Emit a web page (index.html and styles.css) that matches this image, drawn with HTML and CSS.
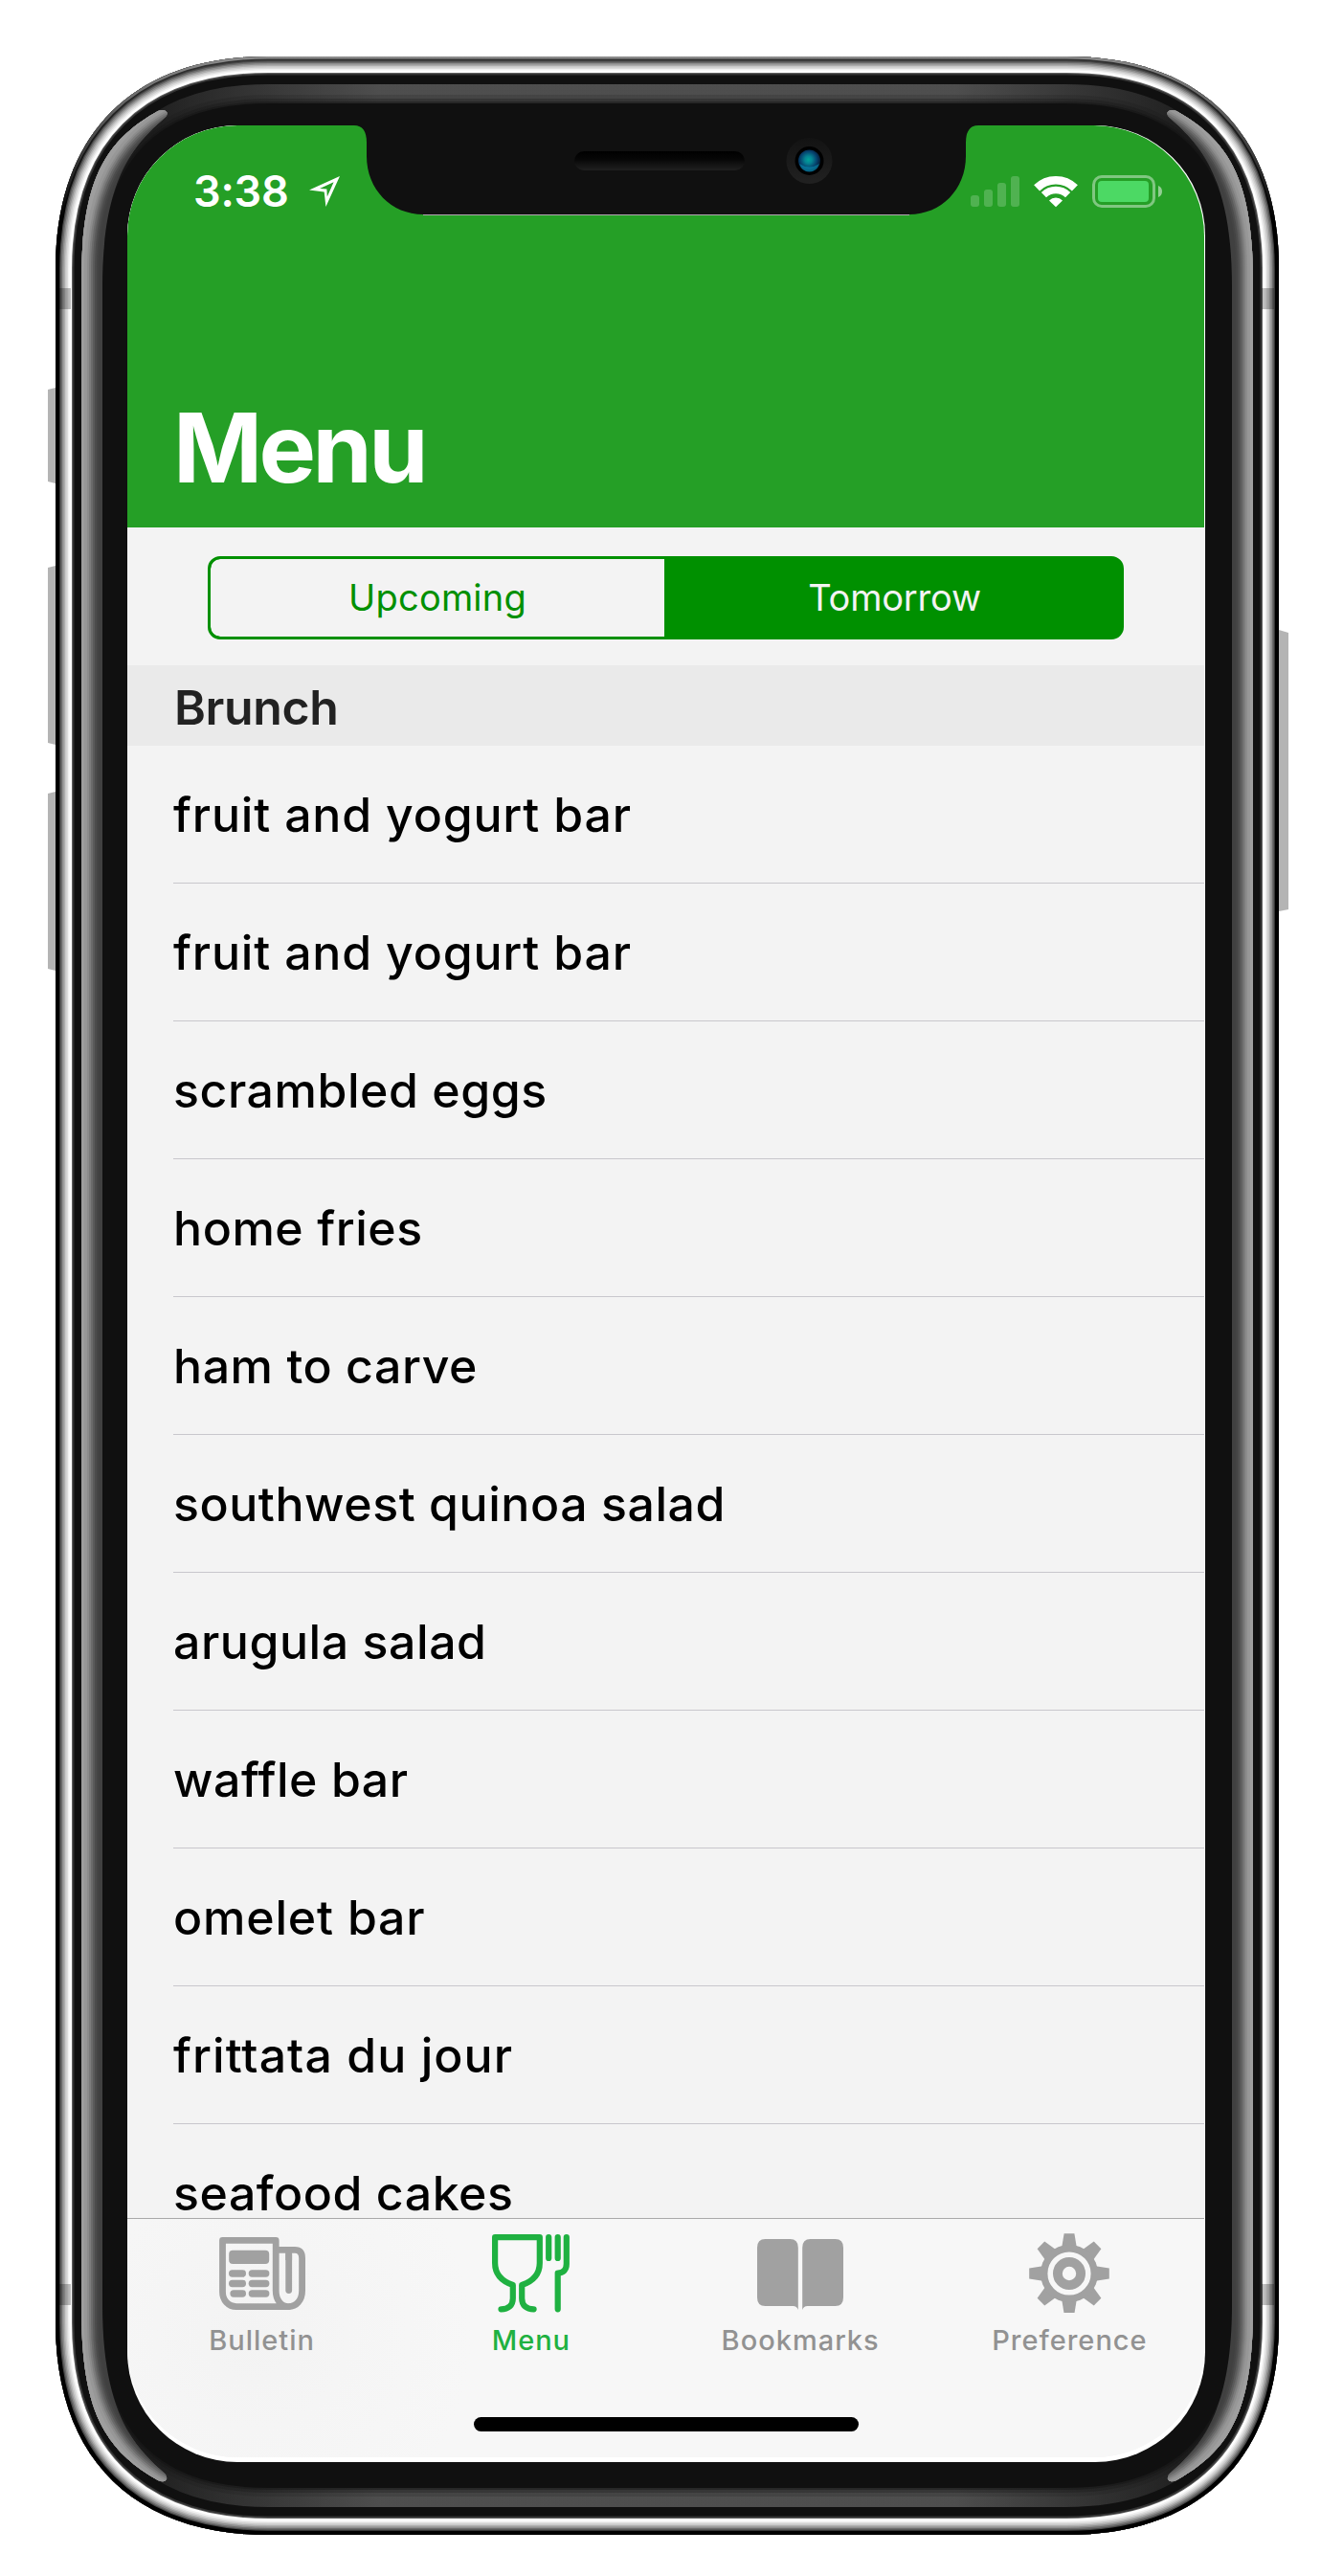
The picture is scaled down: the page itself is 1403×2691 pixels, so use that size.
FILE: index.html
```html
<!DOCTYPE html>
<html lang="en">
<head>
<meta charset="utf-8">
<title>Menu</title>
<link rel="stylesheet" href="styles.css">
</head>
<body>
<div class="phone">
  <svg class="frame" viewBox="0 0 1403 2691" aria-hidden="true">
    <defs>
      <path id="outline" d="M58 281C58 140 139 59 280 59H1114C1255 59 1336 140 1336 281V2426C1336 2567 1255 2648 1114 2648H280C139 2648 58 2567 58 2426Z"/>
      <clipPath id="body"><use href="#outline"/></clipPath>
      <clipPath id="glint">
        <path d="M85 290C86 190 108 148 165 116Q172 113 175 118Q175 121 170 125C138 153 107 190 107 300V2407C107 2517 138 2554 170 2582Q175 2586 174 2590Q172 2594 165 2591C108 2559 86 2517 85 2417Z"/>
      </clipPath>
      <linearGradient id="edge" gradientUnits="userSpaceOnUse" x1="0" y1="59" x2="0" y2="230">
        <stop offset="0" stop-color="#8c8c8c"/><stop offset=".5" stop-color="#4a4a4a"/><stop offset="1" stop-color="#000"/>
      </linearGradient>
      <linearGradient id="edge2" gradientUnits="userSpaceOnUse" x1="0" y1="59" x2="0" y2="230">
        <stop offset="0" stop-color="#333"/><stop offset="1" stop-color="#000"/>
      </linearGradient>
      <linearGradient id="sheen" gradientUnits="userSpaceOnUse" x1="160" y1="0" x2="1234" y2="0">
        <stop offset="0" stop-color="#222"/><stop offset=".22" stop-color="#525252"/><stop offset=".78" stop-color="#525252"/><stop offset="1" stop-color="#222"/>
      </linearGradient>
      <g id="highlight" clip-path="url(#glint)" fill="none">
        <use href="#outline" stroke="#404040" stroke-width="140"/>
        <use href="#outline" stroke="#444" stroke-width="90"/>
        <use href="#outline" stroke="#4c4c4c" stroke-width="86"/>
        <use href="#outline" stroke="#5a5a5a" stroke-width="82"/>
        <use href="#outline" stroke="#6a6a6a" stroke-width="78"/>
        <use href="#outline" stroke="#7c7c7c" stroke-width="74"/>
        <use href="#outline" stroke="#8c8c8c" stroke-width="70"/>
        <use href="#outline" stroke="#979797" stroke-width="66"/>
        <use href="#outline" stroke="#9e9e9e" stroke-width="60"/>
      </g>
    </defs>
    <g fill="#b4b4b4">
      <path d="M58 405L50 407V503L58 505Z"/>
      <path d="M58 591L50 593V776L58 778Z"/>
      <path d="M58 827L50 829V1012L58 1014Z"/>
      <path d="M1336 658L1346 661V950L1336 952Z"/>
    </g>
    <g clip-path="url(#body)" fill="none">
      <use href="#outline" fill="#101010"/>
      <g stroke="url(#sheen)">
        <use href="#outline" stroke-width="98" stroke-opacity=".35"/>
        <use href="#outline" stroke-width="94" stroke-opacity=".35"/>
        <use href="#outline" stroke-width="88" stroke-opacity=".5"/>
        <use href="#outline" stroke-width="80" stroke-opacity=".7"/>
      </g>
      <use href="#outline" stroke="#101010" stroke-width="58"/>
      <use href="#outline" stroke="#333" stroke-width="39"/>
      <use href="#outline" stroke="#606060" stroke-width="36"/>
      <use href="#outline" stroke="#fff" stroke-width="34"/>
      <use href="#outline" stroke="#f0f0f0" stroke-width="29"/>
      <use href="#outline" stroke="#dcdcdc" stroke-width="26"/>
      <use href="#outline" stroke="#c8c8c8" stroke-width="23"/>
      <use href="#outline" stroke="#adadad" stroke-width="20"/>
      <use href="#outline" stroke="#8e8e8e" stroke-width="17"/>
      <use href="#outline" stroke="#6c6c6c" stroke-width="14"/>
      <use href="#outline" stroke="#484848" stroke-width="11"/>
      <use href="#outline" stroke="url(#edge2)" stroke-width="8.5"/>
      <use href="#outline" stroke="url(#edge)" stroke-width="5"/>
      <path fill="#000" fill-opacity=".25" d="M62 301H74V323H62ZM62 2386H74V2408H62ZM1318 301H1331V323H1318ZM1318 2386H1331V2408H1318Z"/>
    </g>
    <path d="M79 290H85V2417H79ZM107 300H133V2407H107ZM1309 290H1315V2417H1309ZM1261 300H1287V2407H1261Z" fill="#101010"/>
    <use href="#highlight"/>
    <use href="#highlight" transform="translate(1394 0) scale(-1 1)"/>
  </svg>

  <main class="screen">
    <div class="app">
      <header class="header">
        <div class="status">
          <span class="time">3:38</span>
          <svg class="location" width="32" height="32" viewBox="0 0 32 32"><path fill="#fff" fill-rule="evenodd" d="M0 14.6L32 0L17.4 32L15.7 16.6ZM11 13L25.6 6.2L18.8 21.5L18.4 13.4Z"/></svg>
          <svg class="indicators" width="202" height="36" viewBox="0 0 202 36">
            <g fill="#fff" fill-opacity=".2">
              <rect x="1" y="22" width="9" height="12" rx="3"/><rect x="15" y="16" width="9" height="18" rx="3"/>
              <rect x="29" y="9" width="9" height="25" rx="3"/><rect x="43" y="2" width="9" height="32" rx="3"/>
            </g>
            <g fill="none" stroke="#fff">
              <path stroke-width="8.6" d="M70.1 14.4A28.5 28.5 0 0 1 109.9 14.4"/>
              <path stroke-width="7.4" d="M77.4 21.6A18 18 0 0 1 102.6 21.6"/>
            </g>
            <path fill="#fff" d="M83 27.4A10 10 0 0 1 97 27.4L90 34.2Z"/>
            <rect x="129.5" y="2.5" width="63" height="31" rx="8.5" fill="none" stroke="#fff" stroke-opacity=".42" stroke-width="3"/>
            <rect x="134" y="7" width="53" height="22" rx="4" fill="#4cd964"/>
            <path d="M197 12Q201 13.500 201 18Q201 22.500 197 24Z" fill="#fff" fill-opacity=".5"/>
          </svg>
        </div>
        <h1 class="title">Menu</h1>
      </header>

      <nav class="segments">
        <a class="segment upcoming">Upcoming</a>
        <a class="segment selected">Tomorrow</a>
      </nav>

      <section class="menu">
        <h2 class="section-title">Brunch</h2>
        <ul class="items">
          <li>fruit and yogurt bar</li>
          <li>fruit and yogurt bar</li>
          <li class="snug">scrambled eggs</li>
          <li class="snug">home fries</li>
          <li class="snug">ham to carve</li>
          <li class="snug">southwest quinoa salad</li>
          <li class="snug">arugula salad</li>
          <li class="snug">waffle bar</li>
          <li>omelet bar</li>
          <li class="airy">frittata du jour</li>
          <li class="snug">seafood cakes</li>
        </ul>
      </section>

      <footer class="tabbar">
        <div class="tabs">
          <a class="tab">
            <svg width="90" height="90" viewBox="0 -11 90 90">
              <g fill="none" stroke="#a1a1a1" stroke-width="6.8" stroke-linejoin="round">
                <path d="M3.500 3.400H59.200V56C59.200 66 65 72.600 72.500 72.600H18C9.500 72.600 3.500 66 3.500 57Z"/>
                <path d="M59.200 13.300H79Q86.600 13.300 86.600 22V56C86.600 66 80.500 72.600 72.500 72.600"/>
                <path d="M72.700 18V55.500" stroke-linecap="round"/>
              </g>
              <g fill="#a1a1a1">
                <path d="M69.300 14H76.100V24H69.300Z"/>
                <rect x="10.200" y="13.700" width="42" height="14.300" rx="4"/>
                <rect x="10" y="34.300" width="18" height="7.500" rx="3.700"/><rect x="30.700" y="34.300" width="21.700" height="7.500" rx="3.700"/>
                <rect x="10" y="44.700" width="18" height="7.500" rx="3.700"/><rect x="30.700" y="44.700" width="21.700" height="7.500" rx="3.700"/>
                <rect x="11.400" y="55.200" width="16.600" height="7.500" rx="3.700"/><rect x="30.700" y="55.200" width="21.700" height="7.500" rx="3.700"/>
              </g>
            </svg>
            <span>Bulletin</span>
          </a>
          <a class="tab active">
            <svg width="81" height="90" viewBox="0 -8 81 90">
              <g fill="none" stroke="#1fb141" stroke-width="6.200" stroke-linecap="round" stroke-linejoin="round">
                <path d="M9.500 78.300C17 78.300 21.800 74.500 21.800 67V53C10 49 3.100 42 3.100 30V3.100H49.800V30C49.800 42 43 49 31.200 53V67C31.200 74.500 36 78.300 43.600 78.300"/>
                <path d="M59.200 3.100V25M68.700 3.100V25M77.800 3.100V31C77.800 37 74.500 40.500 68.700 40.500V78.300"/>
              </g>
            </svg>
            <span>Menu</span>
          </a>
          <a class="tab">
            <svg width="90" height="90" viewBox="0 -13 90 90">
              <g fill="#a1a1a1">
                <path d="M8.500 0H34.300Q42.800 0 42.800 9V74Q41.500 70 37.500 70H8.500Q0 70 0 61V9Q0 0 8.500 0Z"/>
                <path d="M81.500 0H55.700Q47.200 0 47.200 9V74Q48.500 70 52.500 70H81.500Q90 70 90 61V9Q90 0 81.500 0Z"/>
              </g>
            </svg>
            <span>Bookmarks</span>
          </a>
          <a class="tab">
            <svg width="90" height="90" viewBox="-45 -49 90 90">
              <defs><path id="tooth" d="M-5.400 -41.800H5.400L8 -26H-8Z"/></defs>
              <g fill="#a1a1a1">
                <use href="#tooth"/><use href="#tooth" transform="rotate(45)"/><use href="#tooth" transform="rotate(90)"/><use href="#tooth" transform="rotate(135)"/>
                <use href="#tooth" transform="rotate(180)"/><use href="#tooth" transform="rotate(225)"/><use href="#tooth" transform="rotate(270)"/><use href="#tooth" transform="rotate(315)"/>
                <circle r="30"/>
              </g>
              <circle r="19.800" fill="none" stroke="#f7f7f7" stroke-width="5.600"/>
              <circle r="7.200" fill="#f7f7f7"/>
            </svg>
            <span>Preference</span>
          </a>
        </div>
        <div class="home"></div>
      </footer>
    </div>

    <svg class="notch" viewBox="0 0 652 94" aria-hidden="true">
      <defs>
        <linearGradient id="slot" x1="0" y1="0" x2="0" y2="1"><stop offset="0" stop-color="#000"/><stop offset=".4" stop-color="#060606"/><stop offset="1" stop-color="#202020"/></linearGradient>
        <linearGradient id="rim" x1="0" y1="0" x2="0" y2="1"><stop offset="0" stop-color="#131313"/><stop offset="1" stop-color="#212121"/></linearGradient>
        <radialGradient id="lens" cx=".46" cy=".45" r=".55"><stop offset="0" stop-color="#00a398"/><stop offset=".3" stop-color="#058393"/><stop offset=".7" stop-color="#06406c"/><stop offset="1" stop-color="#041a33"/></radialGradient>
      </defs>
      <path d="M0 -1H652V0Q639 0 639 18V32C639 67 613 93 580 93H72C39 93 13 67 13 32V18Q13 0 0 0Z" fill="#101010"/>
      <path d="M72 93.500H580" stroke="#b3a3b1"/>
      <rect x="230" y="27" width="178" height="20" rx="10" fill="url(#slot)"/>
      <circle cx="475.500" cy="37" r="24" fill="url(#rim)"/>
      <circle cx="475.500" cy="37" r="15" fill="#000"/>
      <circle cx="475.500" cy="37" r="11.500" fill="url(#lens)"/>
      <path d="M465 40Q475.500 47 486 40Q483 48.500 475.500 48.500Q468 48.500 465 40Z" fill="#08a4c4" fill-opacity=".5"/>
    </svg>
  </main>
</div>
</body>
</html>
```
FILE: styles.css
```css
* { box-sizing: border-box; }

body {
  margin: 0;
  background: #fff;
  font-family: Inter, "Liberation Sans", sans-serif;
}

.phone {
  position: relative;
  width: 1403px;
  height: 2691px;
  padding: 131px 0 0 133px;
}

/* The handset casing is a backdrop behind the screen. */
.frame {
  position: absolute;
  inset: 0;
  width: 1403px;
  height: 2691px;
}

.screen {
  position: relative;
  width: 1126px;
  height: 2441px;
  border-radius: 115px;
  overflow: hidden;
  background: #fff;
}

.app {
  display: flex;
  flex-direction: column;
  width: 1125px;
  height: 2436px;
  border-radius: 115px 116px 115px 115px;
  overflow: hidden;
  background: #f3f3f3;
}

.header {
  flex: none;
  height: 420px;
  padding-top: 39px;
  background: #259f26;
  color: #fff;
}

.status {
  display: flex;
  align-items: flex-start;
  height: 60px;
  padding-left: 69px;
}

.time {
  width: 121px;
  font-size: 45px;
  font-weight: 600;
  line-height: 60px;
  letter-spacing: -0.2px;
}

.location { margin-top: 14px; }

.indicators { margin: 12px 0 0 658px; }

.title {
  margin: 188px 0 0 48px;
  font-size: 100px;
  font-weight: 700;
  line-height: 100px;
  letter-spacing: -3.6px;
}

.segments {
  flex: none;
  display: flex;
  height: 87px;
  margin: 30px 84px 27px;
  border: 3px solid #009000;
  border-radius: 13px;
  overflow: hidden;
  background: #009000;
}

.segment {
  flex: 1;
  font-size: 38px;
  line-height: 81px;
  text-align: center;
  color: #f3f3f3;
}

.upcoming {
  flex: none;
  width: 474px;
  border-radius: 10px 0 0 10px;
  background: #f3f3f3;
  color: #009000;
  letter-spacing: 0.2px;
}

.selected {
  padding-left: 4px;
  letter-spacing: -0.2px;
}

.menu {
  flex: 1;
  min-height: 0;
  overflow: hidden;
}

.section-title {
  height: 84px;
  margin: 0;
  padding: 4px 0 0 49px;
  background: #eaeaea;
  color: #222;
  font-size: 50px;
  font-weight: 600;
  line-height: 80px;
  letter-spacing: -0.4px;
}

.items {
  margin: 0;
  padding: 0 0 0 48px;
  list-style: none;
}

.items li {
  height: 144px;
  border-bottom: 1px solid #c8c7cc;
  font-size: 50px;
  font-weight: 500;
  line-height: 144px;
  letter-spacing: 0.8px;
  white-space: nowrap;
}

.items .snug { letter-spacing: 0.55px; }

.items .airy { letter-spacing: 1.05px; }

.tabbar {
  flex: none;
  height: 250px;
  border-top: 1px solid #a9a9a9;
  background: radial-gradient(circle at 130px 120px, #f3f3f3 0, #f5f5f5 100px, #f7f7f7 230px);
}

.tabs { display: flex; padding-top: 8px; }

.tab {
  flex: 1;
  display: flex;
  flex-direction: column;
  align-items: center;
  gap: 9px;
  color: #929292;
  font-size: 29px;
  font-weight: 500;
  line-height: 40px;
  letter-spacing: 1px;
}

.tab.active { color: #1fb141; }

.home {
  width: 402px;
  height: 15px;
  margin: 60px auto 0;
  border-radius: 7.5px;
  background: #000;
}

.notch {
  position: absolute;
  top: 0;
  left: 237px;
  width: 652px;
  height: 94px;
}
```
